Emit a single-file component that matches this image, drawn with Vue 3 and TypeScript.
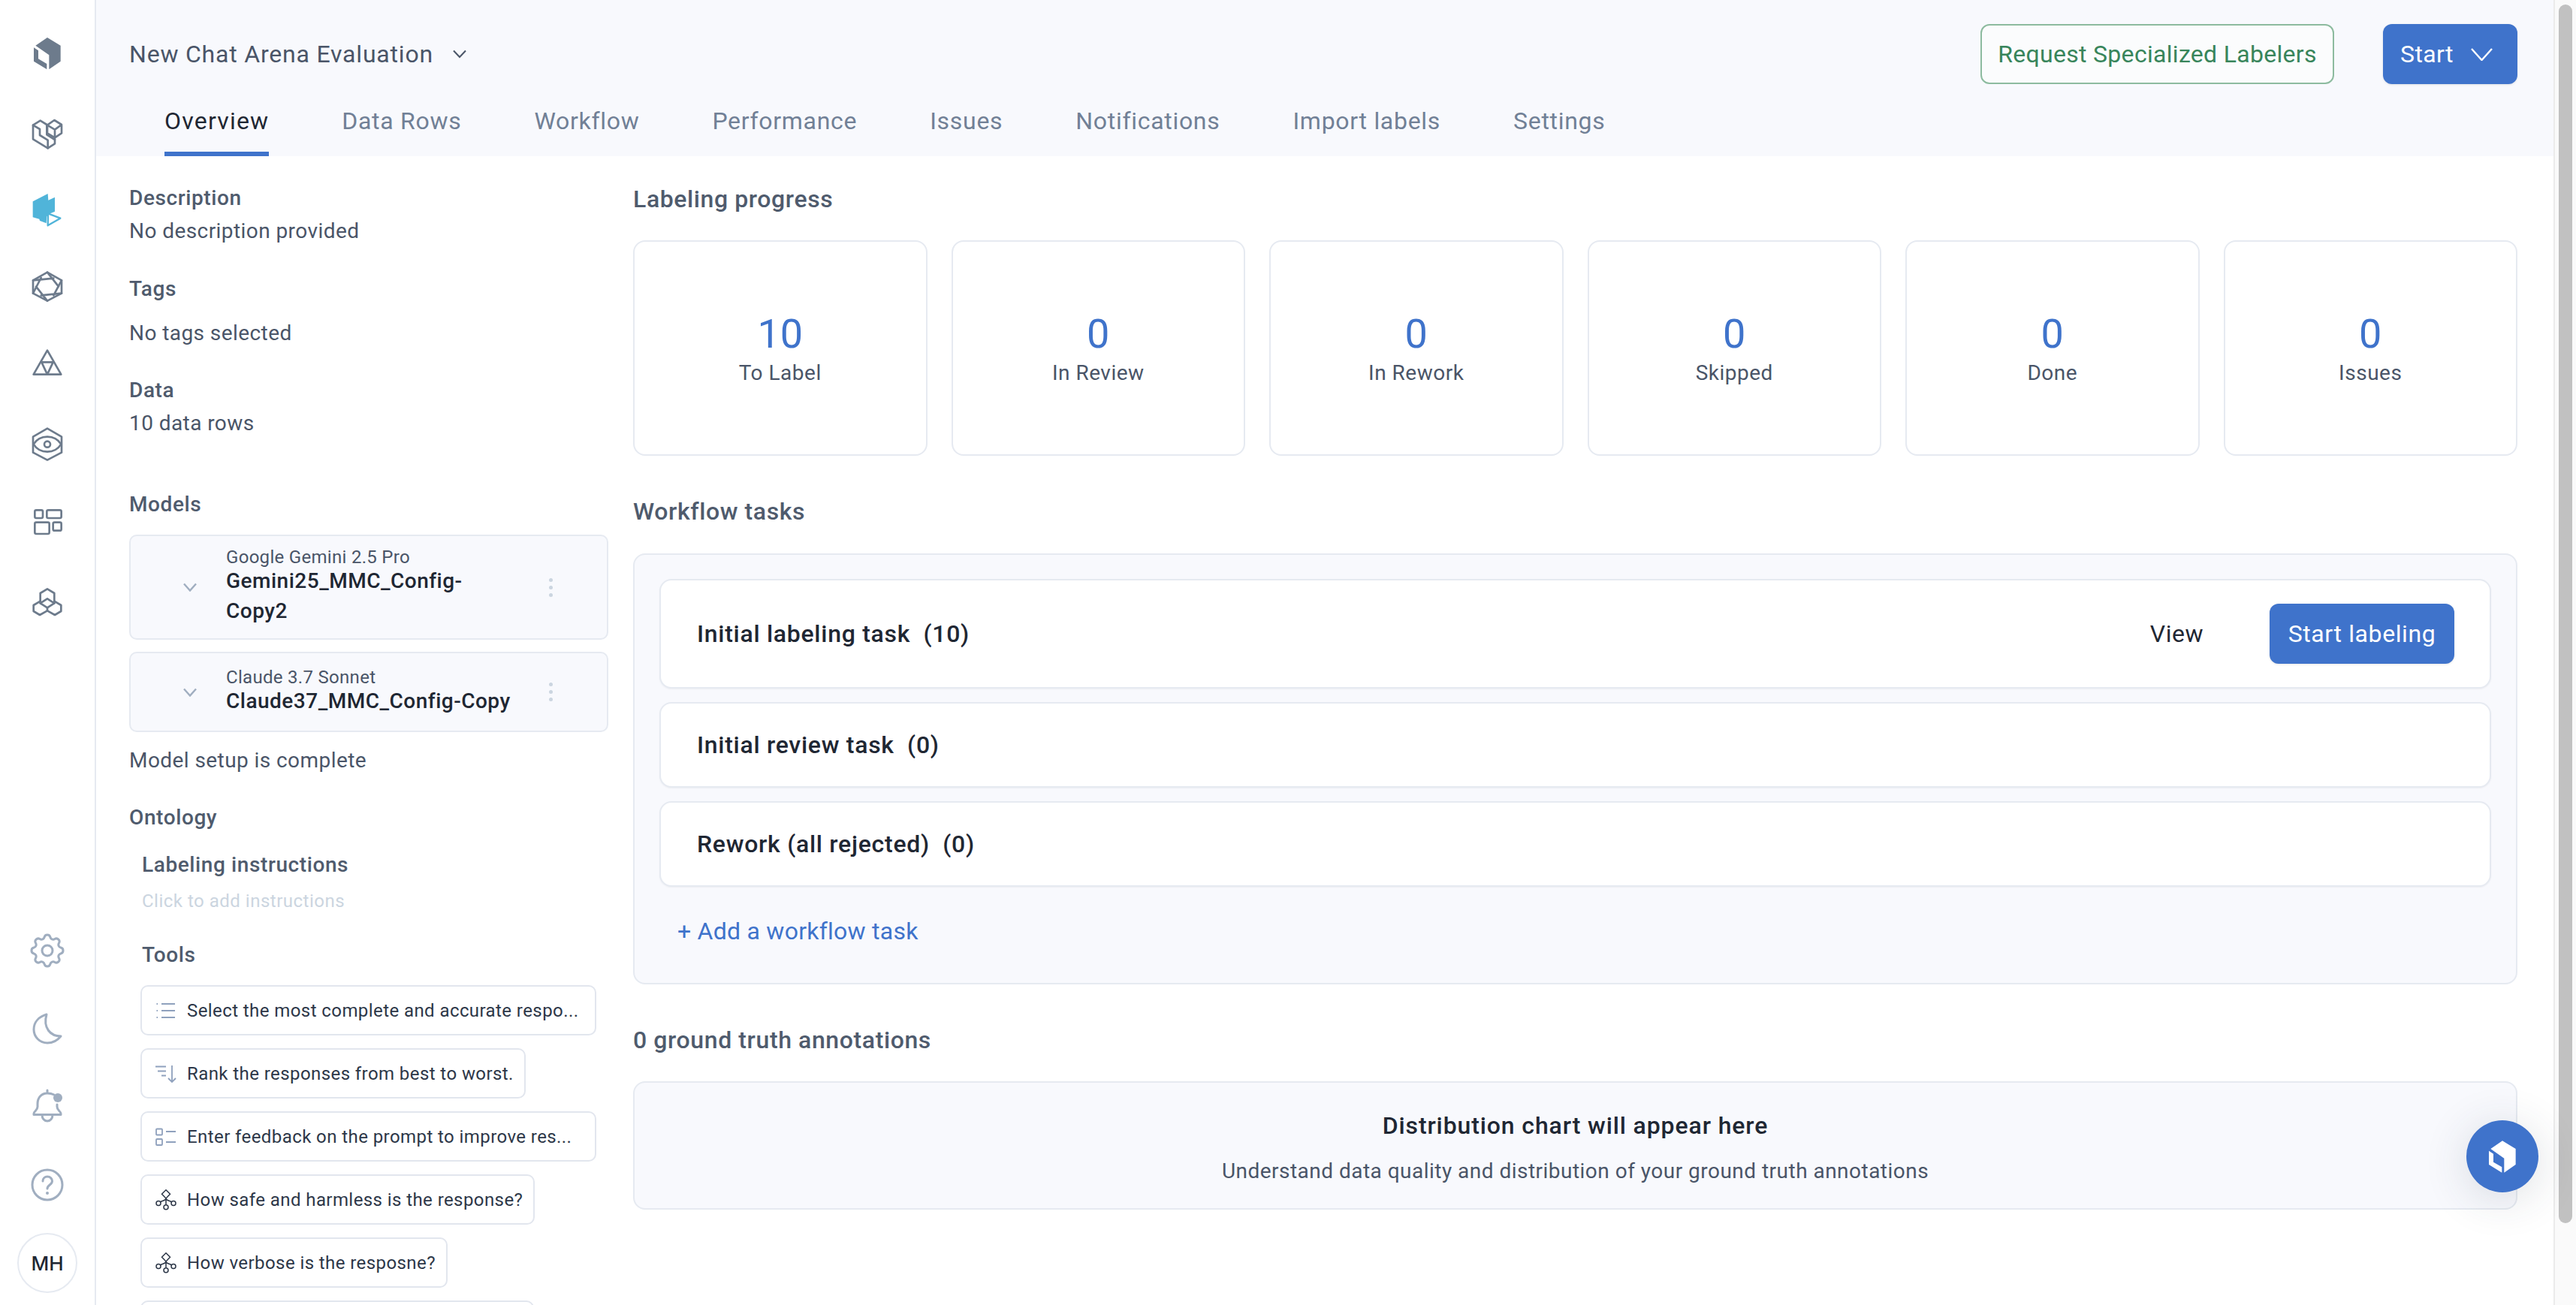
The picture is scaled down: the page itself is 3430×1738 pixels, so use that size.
<script setup lang="ts">
const logoTop = 'M90 30 L143 62 V125 L97 157 V100 L43 62 Z'
const logoLeft = 'M36 70 L54 82 V115 L88 135 V157 L36 125 Z'

const tabs: string[] = ['Overview', 'Data Rows', 'Workflow', 'Performance', 'Issues', 'Notifications', 'Import labels', 'Settings']
const stats: { value: number; label: string }[] = [
  { value: 10, label: 'To Label' },
  { value: 0, label: 'In Review' },
  { value: 0, label: 'In Rework' },
  { value: 0, label: 'Skipped' },
  { value: 0, label: 'Done' },
  { value: 0, label: 'Issues' },
]
const tools: { icon: string; text: string; wide: boolean }[] = [
  { icon: 'list', text: 'Select the most complete and accurate respo...', wide: true },
  { icon: 'sort', text: 'Rank the responses from best to worst.', wide: false },
  { icon: 'check', text: 'Enter feedback on the prompt to improve res...', wide: true },
  { icon: 'tree', text: 'How safe and harmless is the response?', wide: false },
  { icon: 'tree', text: 'How verbose is the resposne?', wide: false },
]
</script>

<template>
  <div class="app">
    <nav class="rail">
      <div class="rail-group">
        <svg class="ic" viewBox="0 3 180 180"><path class="solid" :d="logoTop" /><path class="solid" :d="logoLeft" /></svg>
        <svg class="ic line" viewBox="0 315 180 180">
          <path d="M33 380 L62 362 L88 378 V418 L120 438 V454 L92 472 L33 436 Z" />
          <path d="M33 380 L60 396 V420 L92 440 V472" />
          <path d="M90 380 L118 360 L147 378 V412 L120 430 L90 412 Z M90 380 L120 398 L147 378 M120 398 V438" />
        </svg>
        <svg class="ic" viewBox="0 627 180 180">
          <path class="blue" d="M32 685 L92 654 L94 680 L120 668 V725 L97 735 L88 745 L86 772 L60 762 L58 755 L32 748 Z" />
          <path class="blue-line" d="M93 733 L142 752 L92 781 Z" />
        </svg>
        <svg class="ic line" viewBox="0 939 180 180">
          <path d="M90 968 L147 1000 V1052 L90 1082 L33 1052 V1000 Z" />
          <path d="M33 1000 L115 992 M90 968 L135 1025 M147 1000 L115 1060 M147 1052 L65 1060 M90 1082 L45 1025 M33 1052 L65 990" />
        </svg>
        <svg class="ic line" viewBox="0 21 180 180">
          <path d="M90 50 L145 146 H35 Z" />
          <path d="M67 97 H113 M67 97 L90 146 L113 97" />
        </svg>
        <svg class="ic line" viewBox="0 333 180 180">
          <path d="M90 362 L147 395 V458 L90 488 L33 458 V395 Z" />
          <path d="M35 425 C60 385 120 385 145 425 C120 465 60 465 35 425 Z" />
          <circle cx="90" cy="425" r="12" />
        </svg>
        <svg class="ic line" viewBox="0 645 180 180">
          <rect x="40" y="688" width="32" height="32" rx="6" />
          <rect x="88" y="688" width="58" height="32" rx="6" />
          <rect x="40" y="737" width="58" height="46" rx="6" />
          <rect x="113" y="737" width="33" height="33" rx="6" />
        </svg>
        <svg class="ic line" viewBox="0 957 180 180">
          <path d="M62 1020 L90 1003 L118 1020 V1060 L90 1078 L62 1060 Z" />
          <path d="M62 1052 L35 1068 V1092 L60 1107 L90 1090 L120 1107 L145 1092 V1068 L118 1052" />
          <path d="M62 1060 L90 1042 L118 1060 M90 1078 V1090" />
        </svg>
      </div>
      <div class="rail-group rail-bottom">
        <svg class="ic soft gear" viewBox="-0.85 -0.85 25.7 25.7">
          <path d="M10.325 4.317c.426-1.756 2.924-1.756 3.35 0a1.724 1.724 0 002.573 1.066c1.543-.94 3.31.826 2.37 2.37a1.724 1.724 0 001.065 2.572c1.756.426 1.756 2.924 0 3.35a1.724 1.724 0 00-1.066 2.573c.94 1.543-.826 3.31-2.37 2.37a1.724 1.724 0 00-2.572 1.065c-.426 1.756-2.924 1.756-3.35 0a1.724 1.724 0 00-2.573-1.066c-1.543.94-3.31-.826-2.37-2.37a1.724 1.724 0 00-1.065-2.572c-1.756-.426-1.756-2.924 0-3.35a1.724 1.724 0 001.066-2.573c-.94-1.543.826-3.31 2.37-2.37.996.608 2.296.07 2.572-1.065z" />
          <circle cx="12" cy="12" r="3" />
        </svg>
        <svg class="ic soft" viewBox="-10 -9 60 60">
          <path d="M19 2 C9 5 2 12 2 22 C2 32 10 40 20 40 C28 40 34 36 38 31 C24 31 14 20 19 2 Z" />
        </svg>
        <svg class="ic soft" viewBox="-6 -6 60 60">
          <path d="M24 2 V6 M33 8 C30 6.5 27 6 24 6 C16 6 11 12 11 20 V24 C11 29 6 30 6 33 V34.5 H42 V33 C42 30 37 29 37 24 V21" />
          <path d="M17 35 A7 8 0 0 0 31 35" />
          <circle class="soft-dot" cx="38" cy="12" r="6" />
        </svg>
        <svg class="ic soft" viewBox="-6 -6 60 60">
          <circle cx="24" cy="24" r="20" />
          <path d="M18 19 C18 15 21 13 24 13 C28 13 30.5 16 30.5 19 C30.5 24 24 24 24 29" />
          <circle class="soft-dot" cx="24" cy="35" r="2" />
        </svg>
        <div class="avatar">MH</div>
      </div>
    </nav>

    <div class="main">
      <header class="top">
        <div class="top-row">
          <div class="project">
            <span>New Chat Arena Evaluation</span>
            <svg class="project-chev" viewBox="0 0 18 12"><path d="M1 1.5 L9 10 L17 1.5" /></svg>
          </div>
          <div class="top-actions">
            <button class="btn-outline">Request Specialized Labelers</button>
            <button class="btn-start">
              <span>Start</span>
              <svg class="start-chev" viewBox="0 0 29 17"><path d="M1 1 L14.5 16 L28 1" /></svg>
            </button>
          </div>
        </div>
        <div class="tabs">
          <div v-for="(tab, i) in tabs" :key="tab" class="tab" :class="{ active: i === 0 }">{{ tab }}</div>
        </div>
      </header>

      <div class="body">
        <aside class="left">
          <div class="label">Description</div>
          <div class="value gap-4">No description provided</div>
          <div class="label gap-37">Tags</div>
          <div class="value gap-19">No tags selected</div>
          <div class="label gap-36">Data</div>
          <div class="value gap-4">10 data rows</div>

          <div class="label gap-68">Models</div>
          <div class="model-card gap-20">
            <svg class="model-chev" viewBox="0 0 18 12"><path d="M1 1.5 L9 10.5 L17 1.5" /></svg>
            <div class="model-text">
              <div class="model-provider">Google Gemini 2.5 Pro</div>
              <div class="model-name">Gemini25_MMC_Config-<br />Copy2</div>
            </div>
            <div class="kebab"><i></i><i></i><i></i></div>
          </div>
          <div class="model-card gap-16">
            <svg class="model-chev" viewBox="0 0 18 12"><path d="M1 1.5 L9 10.5 L17 1.5" /></svg>
            <div class="model-text">
              <div class="model-provider">Claude 3.7 Sonnet</div>
              <div class="model-name">Claude37_MMC_Config-Copy</div>
            </div>
            <div class="kebab"><i></i><i></i><i></i></div>
          </div>
          <div class="value gap-18">Model setup is complete</div>

          <div class="label gap-36">Ontology</div>
          <div class="ontology">
            <div class="label">Labeling instructions</div>
            <div class="hint">Click to add instructions</div>
            <div class="label tools-title">Tools</div>
            <div class="tool-list">
              <div v-for="tool in tools" :key="tool.text" class="tool" :class="{ 'tool-wide': tool.wide }">
                <svg class="tool-ic" :class="tool.icon === 'tree' ? 'dark' : 'muted'" viewBox="0 0 28 28">
                  <template v-if="tool.icon === 'list'">
                    <path d="M8 5 H26 M8 14 H26 M8 23 H26" />
                    <path d="M1.5 5 H3 M1.5 14 H3 M1.5 23 H3" />
                  </template>
                  <template v-else-if="tool.icon === 'sort'">
                    <path d="M0 4.5 H14 M3 10.5 H14 M8 16.5 H14" />
                    <path d="M22 3 V25 M17 20 L22 25 L27 20" />
                  </template>
                  <template v-else-if="tool.icon === 'check'">
                    <rect x="1" y="3.5" width="8" height="8" rx="1" />
                    <rect x="1" y="17" width="8" height="8" rx="1" />
                    <path d="M14 7 H27 M14 21 H27" />
                  </template>
                  <template v-else>
                    <path d="M14 0.8 L19.5 6.3 L14 12 L8.5 6.3 Z" />
                    <path d="M14 12 V20.5 M14 12 C14 15 9 15 6.6 16.8 M14 12 C14 15 19 15 21.4 16.8" />
                    <circle cx="4" cy="18.4" r="3" />
                    <circle cx="24" cy="18.4" r="3" />
                    <circle cx="14" cy="23.8" r="3" />
                  </template>
                </svg>
                <span>{{ tool.text }}</span>
              </div>
              <div class="tool tool-cut"></div>
            </div>
          </div>
        </aside>

        <section class="right">
          <h2 class="section-title">Labeling progress</h2>
          <div class="stats">
            <div v-for="stat in stats" :key="stat.label" class="stat">
              <div class="stat-value">{{ stat.value }}</div>
              <div class="stat-label">{{ stat.label }}</div>
            </div>
          </div>

          <h2 class="section-title title-tasks">Workflow tasks</h2>
          <div class="panel">
            <div class="task task-first">
              <span class="task-name">Initial labeling task&nbsp; (10)</span>
              <div class="task-actions">
                <span class="task-view">View</span>
                <button class="btn-label">Start labeling</button>
              </div>
            </div>
            <div class="task"><span class="task-name">Initial review task&nbsp; (0)</span></div>
            <div class="task"><span class="task-name">Rework (all rejected)&nbsp; (0)</span></div>
            <div class="add-task">+ Add a workflow task</div>
          </div>

          <h2 class="section-title title-truth">0 ground truth annotations</h2>
          <div class="chart-empty">
            <div class="chart-title">Distribution chart will appear here</div>
            <div class="chart-sub">Understand data quality and distribution of your ground truth annotations</div>
          </div>
        </section>
      </div>
    </div>

    <div class="scrollbar"><div class="thumb"></div></div>

    <div class="chat">
      <svg class="chat-logo" viewBox="36 30 108 127"><path :d="logoTop" /><path :d="logoLeft" /></svg>
    </div>
  </div>
</template>

<style>
html, body { margin: 0; background: #fff; }
</style>

<style scoped>
.app {
  position: relative;
  display: flex;
  width: 3430px;
  height: 1738px;
  overflow: hidden;
  background: #fff;
  font-family: Roboto, "Noto Sans", sans-serif;
  color: #4a5568;
}

.rail {
  box-sizing: border-box;
  flex: none;
  width: 128px;
  padding: 41px 0 16px;
  display: flex;
  flex-direction: column;
  justify-content: space-between;
  border-right: 2px solid #e6eaf1;
  background: #fff;
}
.rail-group {
  display: flex;
  flex-direction: column;
  align-items: center;
  gap: 44px;
}
.ic { width: 60px; height: 60px; flex: none; }
.solid { fill: #6d7b8c; }
.line { fill: none; stroke: #6d7b8c; stroke-width: 8; stroke-linejoin: round; stroke-linecap: round; }
.blue { fill: #50b4d9; }
.blue-line { fill: none; stroke: #50b4d9; stroke-width: 7; stroke-linejoin: round; }
.soft { fill: none; stroke: #a0aec0; stroke-width: 3; stroke-linecap: round; stroke-linejoin: round; }
.soft.gear { stroke-width: 1.3; }
.soft-dot { fill: #a0aec0; stroke: none; }
.avatar {
  box-sizing: border-box;
  width: 80px;
  height: 80px;
  margin-top: -10px;
  border: 2px solid #e6eaf1;
  border-radius: 50%;
  display: flex;
  align-items: center;
  justify-content: center;
  font-family: Inter, Roboto, sans-serif;
  font-size: 26px;
  font-weight: 500;
  color: #1f2733;
}

.main { flex: 1; min-width: 0; display: flex; flex-direction: column; }

.top {
  box-sizing: border-box;
  height: 208px;
  padding: 32px 48px 0 44px;
  background: #f8f9fd;
  flex: none;
}
.top-row { display: flex; align-items: center; justify-content: space-between; height: 80px; }
.project { display: flex; align-items: center; font-size: 32px; line-height: 40px; color: #4a5568; letter-spacing: 0.8px; }
.project-chev { width: 18px; height: 12px; margin-left: 26px; fill: none; stroke: #4a5568; stroke-width: 2; }
.top-actions { display: flex; gap: 65px; }
button { font-family: inherit; cursor: pointer; }
.btn-outline {
  box-sizing: border-box;
  width: 471px;
  height: 80px;
  border: 2px solid #8dbb9f;
  border-radius: 12px;
  background: #fbfcfd;
  color: #38855b;
  font-size: 32px;
  letter-spacing: 0.3px;
  padding: 0;
}
.btn-start {
  box-sizing: border-box;
  width: 179px;
  height: 80px;
  border: none;
  border-radius: 12px;
  background: #3f73cb;
  color: #fff;
  font-size: 32px;
  letter-spacing: 0.4px;
  padding: 0 33px 0 23px;
  display: flex;
  align-items: center;
  justify-content: space-between;
  box-shadow: 0 1px 3px rgba(0, 0, 0, 0.1);
}
.start-chev { width: 29px; height: 17px; fill: none; stroke: #fff; stroke-width: 2.4; }

.tabs { display: flex; gap: 97px; margin-top: 29px; padding-left: 47px; }
.tab { height: 67px; box-sizing: border-box; line-height: 40px; font-size: 32px; color: #718096; letter-spacing: 0.7px; }
.tab.active { color: #1f2733; border-bottom: 6px solid #3f73cb; letter-spacing: 1.2px; }

.body { flex: 1; min-height: 0; display: flex; gap: 33px; padding: 0 48px 0 44px; }

.left { flex: none; width: 638px; padding-top: 36px; }
.label { font-size: 28px; line-height: 40px; font-weight: 500; color: #4f5b6d; letter-spacing: 0.6px; }
.value { font-size: 28px; line-height: 40px; color: #4a5568; letter-spacing: 0.43px; }
.gap-4 { margin-top: 4px; }
.gap-16 { margin-top: 16px; }
.gap-18 { margin-top: 18px; }
.gap-19 { margin-top: 19px; }
.gap-20 { margin-top: 20px; }
.gap-36 { margin-top: 36px; }
.gap-37 { margin-top: 37px; }
.gap-68 { margin-top: 68px; }

.model-card {
  box-sizing: border-box;
  min-height: 107px;
  padding: 16px 72px 16px 70px;
  display: flex;
  align-items: center;
  border: 2px solid #e6eaf1;
  border-radius: 10px;
  background: #f8f9fd;
}
.model-chev { width: 18px; height: 12px; flex: none; margin-right: 39px; fill: none; stroke: #a0aec0; stroke-width: 2.4; }
.model-text { flex: 1; min-width: 0; }
.model-provider { font-size: 24px; line-height: 24px; color: #4a5568; letter-spacing: 0.3px; }
.model-name { font-size: 28px; line-height: 40px; color: #1f2733; font-weight: 500; letter-spacing: 0.5px; }
.kebab { display: flex; flex-direction: column; gap: 5px; flex: none; }
.kebab i { width: 5px; height: 5px; border-radius: 50%; background: #cbd5e0; display: block; }

.ontology { padding-left: 17px; margin-top: 23px; }
.hint { margin-top: 12px; font-size: 24px; line-height: 32px; color: #cbd5e0; letter-spacing: 0.5px; }
.tools-title { margin-top: 36px; }
.tool-list { margin: 20px 0 0 -2px; display: flex; flex-direction: column; align-items: flex-start; gap: 17px; }
.tool {
  box-sizing: border-box;
  height: 67px;
  padding: 0 14px 0 18px;
  display: flex;
  align-items: center;
  gap: 14px;
  border: 2px solid #e2e6ee;
  border-radius: 10px;
  font-size: 24px;
  letter-spacing: 0.42px;
  color: #2d3748;
  background: #fff;
  white-space: nowrap;
}
.tool-wide { width: 607px; }
.tool-cut { width: 524px; flex: none; }
.tool-ic { width: 28px; height: 28px; flex: none; fill: none; stroke-width: 1.8; }
.tool-ic.muted { stroke: #8fa1bd; }
.tool-ic.dark { stroke: #2d3748; stroke-width: 1.5; }

.right { flex: 1; min-width: 0; padding-top: 37px; }
.section-title { margin: 0; font-size: 32px; line-height: 40px; font-weight: 500; color: #4f5b6d; letter-spacing: 0.6px; }
.stats { display: grid; grid-template-columns: repeat(6, 1fr); gap: 32px; margin-top: 35px; }
.stat {
  box-sizing: border-box;
  height: 287px;
  border: 2px solid #e6eaf1;
  border-radius: 16px;
  display: flex;
  flex-direction: column;
  align-items: center;
  padding-top: 93px;
}
.stat-value { font-size: 54px; line-height: 60px; color: #3f73cb; }
.stat-label { margin-top: 4px; font-size: 28px; line-height: 36px; color: #4a5568; letter-spacing: 0.5px; }

.title-tasks { margin-top: 54px; }
.panel {
  box-sizing: border-box;
  height: 574px;
  margin-top: 36px;
  padding: 32px 33px 0 33px;
  border: 2px solid #e6eaf1;
  border-radius: 16px;
  background: #f8f9fd;
  display: flex;
  flex-direction: column;
  gap: 18px;
}
.task {
  box-sizing: border-box;
  min-height: 114px;
  padding: 0 47px 0 48px;
  display: flex;
  align-items: center;
  justify-content: space-between;
  border: 2px solid #e6eaf1;
  border-radius: 16px;
  background: #fff;
  box-shadow: 0 1px 2px rgba(45, 55, 72, 0.06);
}
.task-first { min-height: 146px; }
.task-name { font-size: 32px; line-height: 40px; font-weight: 500; color: #1f2733; letter-spacing: 0.72px; }
.task-actions { display: flex; align-items: center; gap: 88px; }
.task-view { font-size: 32px; color: #1f2733; letter-spacing: 0.5px; }
.btn-label {
  box-sizing: border-box;
  width: 246px;
  height: 80px;
  border: none;
  border-radius: 12px;
  background: #3f73cb;
  color: #fff;
  font-size: 32px;
  letter-spacing: 0.6px;
  padding: 0;
  box-shadow: 0 1px 3px rgba(0, 0, 0, 0.1);
}
.add-task { margin: 21px 0 0 24px; font-size: 32px; line-height: 40px; color: #3f73cb; letter-spacing: 0.25px; }

.title-truth { margin-top: 54px; }
.chart-empty {
  box-sizing: border-box;
  height: 171px;
  margin-top: 35px;
  padding-top: 37px;
  border: 2px solid #e6eaf1;
  border-radius: 16px;
  background: #f8f9fd;
  text-align: center;
}
.chart-title { font-size: 32px; line-height: 40px; font-weight: 500; color: #1f2733; letter-spacing: 0.88px; }
.chart-sub { margin-top: 21px; font-size: 28px; line-height: 40px; color: #4a5568; letter-spacing: 0.48px; }

.scrollbar {
  box-sizing: border-box;
  flex: none;
  width: 30px;
  padding: 6px 5px 0 5px;
  background: #fafafa;
  border-left: 2px solid #ebebeb;
}
.thumb { width: 18px; height: 1623px; border-radius: 9px; background: #c1c1c1; }

.chat {
  position: absolute;
  right: 50px;
  bottom: 150px;
  width: 96px;
  height: 96px;
  border-radius: 50%;
  background: #3f73cb;
  display: flex;
  align-items: center;
  justify-content: center;
  box-shadow: 0 8px 60px rgba(45, 55, 72, 0.16);
}
.chat-logo { width: 36px; height: 43px; fill: #fff; }
</style>
